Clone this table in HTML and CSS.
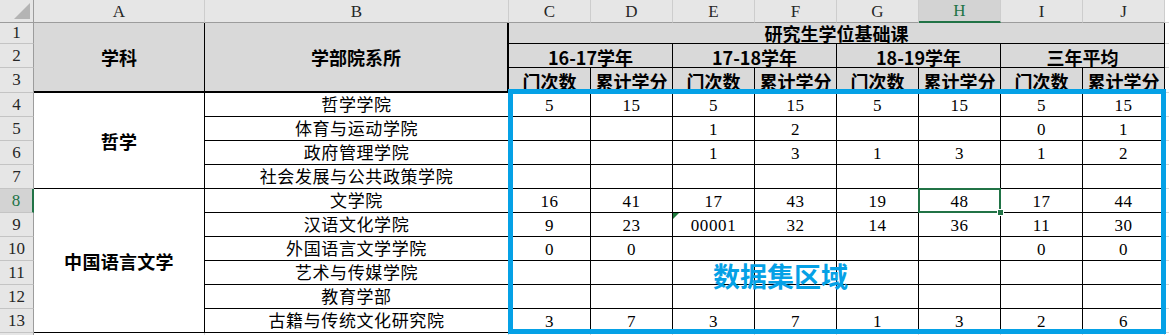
FILE: index.html
```html
<!DOCTYPE html>
<html lang="zh">
<head>
<meta charset="utf-8">
<title>研究生学位基础课</title>
<link rel="stylesheet" href="styles.css">
</head>
<body>
<div class="sheet">
  <div class="grid">
    <!-- column header row -->
    <div class="ch corner"><svg width="34" height="22" viewBox="0 0 34 22"><polygon points="14,19 30,19 30,3" fill="#b4b4b4"/></svg></div>
    <div class="ch">A</div><div class="ch">B</div><div class="ch">C</div><div class="ch">D</div><div class="ch">E</div><div class="ch">F</div><div class="ch">G</div><div class="ch act">H</div><div class="ch">I</div><div class="ch">J</div><div class="ch fl"></div>

    <!-- row 1 -->
    <div class="rh">1</div>
    <div class="c hd rs3 mid thickb">学科</div>
    <div class="c hd rs3 mid thickb thickr">学部院系所</div>
    <div class="c hd cs8">研究生学位基础课</div>
    <div class="fl"></div>

    <!-- row 2 -->
    <div class="rh">2</div>
    <div class="c hd cs2">16-17学年</div>
    <div class="c hd cs2">17-18学年</div>
    <div class="c hd cs2">18-19学年</div>
    <div class="c hd cs2">三年平均</div>
    <div class="fl"></div>

    <!-- row 3 -->
    <div class="rh">3</div>
    <div class="c hd thickb">门次数</div><div class="c hd thickb">累计学分</div>
    <div class="c hd thickb">门次数</div><div class="c hd thickb">累计学分</div>
    <div class="c hd thickb">门次数</div><div class="c hd thickb">累计学分</div>
    <div class="c hd thickb">门次数</div><div class="c hd thickb">累计学分</div>
    <div class="fl"></div>

    <!-- row 4 -->
    <div class="rh">4</div>
    <div class="c subj rs4 mid">哲学</div>
    <div class="c">哲学学院</div>
    <div class="c">5</div><div class="c">15</div><div class="c">5</div><div class="c">15</div><div class="c">5</div><div class="c">15</div><div class="c">5</div><div class="c">15</div>
    <div class="fl"></div>

    <!-- row 5 -->
    <div class="rh">5</div>
    <div class="c">体育与运动学院</div>
    <div class="c"></div><div class="c"></div><div class="c">1</div><div class="c">2</div><div class="c"></div><div class="c"></div><div class="c">0</div><div class="c">1</div>
    <div class="fl"></div>

    <!-- row 6 -->
    <div class="rh">6</div>
    <div class="c">政府管理学院</div>
    <div class="c"></div><div class="c"></div><div class="c">1</div><div class="c">3</div><div class="c">1</div><div class="c">3</div><div class="c">1</div><div class="c">2</div>
    <div class="fl"></div>

    <!-- row 7 -->
    <div class="rh">7</div>
    <div class="c">社会发展与公共政策学院</div>
    <div class="c"></div><div class="c"></div><div class="c"></div><div class="c"></div><div class="c"></div><div class="c"></div><div class="c"></div><div class="c"></div>
    <div class="fl"></div>

    <!-- row 8 -->
    <div class="rh act">8</div>
    <div class="c subj rs6 mid">中国语言文学</div>
    <div class="c">文学院</div>
    <div class="c">16</div><div class="c">41</div><div class="c">17</div><div class="c">43</div><div class="c">19</div><div class="c sel">48</div><div class="c">17</div><div class="c">44</div>
    <div class="fl"></div>

    <!-- row 9 -->
    <div class="rh">9</div>
    <div class="c">汉语文化学院</div>
    <div class="c">9</div><div class="c">23</div><div class="c tri">00001</div><div class="c">32</div><div class="c">14</div><div class="c">36</div><div class="c">11</div><div class="c">30</div>
    <div class="fl"></div>

    <!-- row 10 -->
    <div class="rh">10</div>
    <div class="c">外国语言文学学院</div>
    <div class="c">0</div><div class="c">0</div><div class="c"></div><div class="c"></div><div class="c"></div><div class="c"></div><div class="c">0</div><div class="c">0</div>
    <div class="fl"></div>

    <!-- row 11 -->
    <div class="rh">11</div>
    <div class="c">艺术与传媒学院</div>
    <div class="c"></div><div class="c"></div><div class="c"></div><div class="c"></div><div class="c"></div><div class="c"></div><div class="c"></div><div class="c"></div>
    <div class="fl"></div>

    <!-- row 12 -->
    <div class="rh">12</div>
    <div class="c">教育学部</div>
    <div class="c"></div><div class="c"></div><div class="c"></div><div class="c"></div><div class="c"></div><div class="c"></div><div class="c"></div><div class="c"></div>
    <div class="fl"></div>

    <!-- row 13 -->
    <div class="rh">13</div>
    <div class="c">古籍与传统文化研究院</div>
    <div class="c">3</div><div class="c">7</div><div class="c">3</div><div class="c">7</div><div class="c">1</div><div class="c">3</div><div class="c">2</div><div class="c">6</div>
    <div class="fl"></div>

    <!-- row 14 (partially visible) -->
    <div class="rh"></div>
    <div class="g"></div><div class="g"></div><div class="g"></div><div class="g"></div><div class="g"></div><div class="g"></div><div class="g"></div><div class="g"></div><div class="g"></div><div class="g"></div>
    <div class="fl"></div>
  </div>

  <div class="region"></div>
  <div class="region-label">数据集区域</div>
</div>
</body>
</html>
```

FILE: styles.css
```css
body {
  margin: 0;
  background: #fff;
  overflow: hidden;
}

.sheet {
  position: relative;
  width: 1169px;
  height: 335px;
  overflow: hidden;
}

.grid {
  display: grid;
  grid-template-columns: 34px 171px 304px repeat(8, 82px) 4px;
  grid-template-rows: 23px 21px 24px 25px repeat(10, 24px) 24px;
}

.grid > div {
  box-sizing: border-box;
  min-width: 0;
}

/* column headers */
.ch {
  background: #e6e6e6;
  border-right: 1px solid #cdcdcd;
  border-bottom: 1px solid #9c9c9c;
  display: flex;
  align-items: center;
  justify-content: center;
  font-family: "Liberation Serif", serif;
  font-size: 17px;
  color: #262626;
  padding-top: 1px;
}

.ch.corner {
  padding: 0;
  border-right: 1px solid #9c9c9c;
  display: block;
}

.ch.corner svg {
  display: block;
}

.ch.act {
  background: #d3d3d3;
  color: #217346;
  border-bottom: 2px solid #217346;
}

.ch.fl {
  border-right: 0;
}

/* row headers */
.rh {
  background: #e6e6e6;
  border-right: 1px solid #9c9c9c;
  border-bottom: 1px solid #c4c4c4;
  display: flex;
  align-items: center;
  justify-content: center;
  font-family: "Liberation Serif", serif;
  font-size: 17px;
  color: #262626;
}

.rh.act {
  background: #d3d3d3;
  color: #217346;
  border-right: 2px solid #217346;
}

/* cells */
.c {
  border-right: 1px solid #000;
  border-bottom: 1px solid #000;
  display: flex;
  align-items: flex-end;
  justify-content: center;
  padding-bottom: 0;
  font-family: "Liberation Serif", "Noto Sans CJK SC", serif;
  font-size: 17px;
  line-height: 20px;
  color: #000;
  white-space: nowrap;
  letter-spacing: 0.6px;
}

.hd {
  background: #d9d9d9;
  font-family: "Noto Sans CJK SC", sans-serif;
  font-weight: 700;
  font-size: 18px;
  letter-spacing: 0;
}

.subj {
  font-family: "Noto Sans CJK SC", sans-serif;
  font-weight: 700;
  font-size: 18px;
  letter-spacing: 0.3px;
}

.mid {
  align-items: center;
}

.thickb {
  border-bottom: 2px solid #000;
}

.thickr {
  border-right: 2px solid #000;
}

.rs3 { grid-row: span 3; }
.rs4 { grid-row: span 4; }
.rs6 { grid-row: span 6; }
.cs2 { grid-column: span 2; }
.cs8 { grid-column: span 8; }

.fl {
  background: #fff;
  border-bottom: 1px solid #d4d4d4;
}

.g {
  border-right: 1px solid #d4d4d4;
  border-bottom: 1px solid #d4d4d4;
}

/* active cell */
.sel {
  position: relative;
}

.sel::after {
  content: "";
  position: absolute;
  left: -1px;
  top: -1px;
  right: -1px;
  bottom: -1px;
  border: 2px solid #217346;
}

.sel::before {
  content: "";
  position: absolute;
  right: -4px;
  bottom: -4px;
  width: 5px;
  height: 5px;
  background: #217346;
  border: 1px solid #fff;
  z-index: 2;
}

/* error indicator */
.tri {
  position: relative;
}

.tri::before {
  content: "";
  position: absolute;
  left: 0;
  top: 0;
  width: 0;
  height: 0;
  border-top: 6px solid #1f7a3c;
  border-right: 6px solid transparent;
}

/* overlay region */
.region {
  position: absolute;
  left: 508px;
  top: 89px;
  width: 658px;
  height: 245px;
  box-sizing: border-box;
  border: 5px solid #05a1e6;
}

.region-label {
  position: absolute;
  left: 713px;
  top: 261px;
  font-family: "Noto Sans CJK SC", sans-serif;
  font-weight: 700;
  font-size: 27px;
  line-height: 30px;
  color: #05a1e6;
  white-space: nowrap;
}
```
